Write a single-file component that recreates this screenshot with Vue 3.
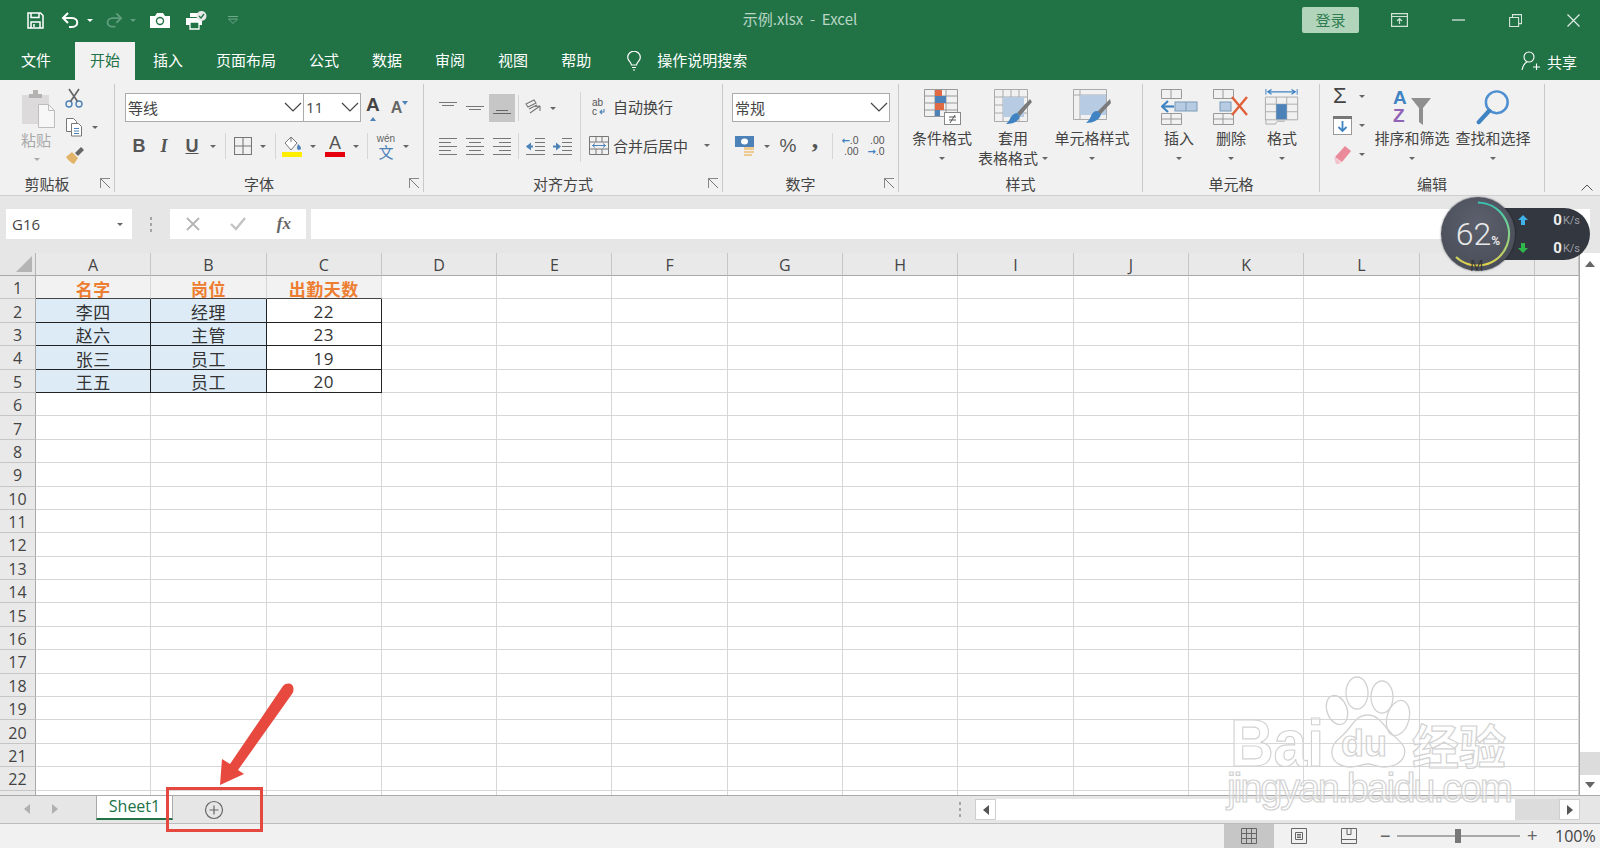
<script setup>
const cols = ['A', 'B', 'C', 'D', 'E', 'F', 'G', 'H', 'I', 'J', 'K', 'L', 'M', '']
const rows = Array.from({ length: 23 }, (_, i) => i + 1)

const table = {
  1: ['名字', '岗位', '出勤天数'],
  2: ['李四', '经理', '22'],
  3: ['赵六', '主管', '23'],
  4: ['张三', '员工', '19'],
  5: ['王五', '员工', '20'],
}

const tabs = ['插入', '页面布局', '公式', '数据', '审阅', '视图', '帮助']

function cellText(r, c) {
  return table[r] && c < 3 ? table[r][c] : ''
}

function cellClass(r, c) {
  if (c > 2 || r > 5) return ''
  if (r === 1) return 'c-head'
  return c < 2 ? 'c-name' : 'c-num'
}

const lines = {
  top: 'M0 1.5h18M3 4.5h12',
  mid: 'M0 5.5h18M3 8.5h12',
  bot: 'M3 9.5h12M0 12.5h18',
  left: 'M0 1.5h18M0 5.5h12M0 9.5h18M0 13.5h12M0 17.5h18',
  center: 'M0 1.5h18M3 5.5h12M0 9.5h18M3 13.5h12M0 17.5h18',
  right: 'M0 1.5h18M6 5.5h12M0 9.5h18M6 13.5h12M0 17.5h18',
}
</script>

<template>
  <div class="app">
    <header class="titlebar">
      <div class="qat">
        <svg class="q-save" width="17" height="17" viewBox="0 0 17 17" fill="none" stroke="#fff" stroke-width="1.5"><path d="M1 1h12.5L16 3.5V16H1z"/><path d="M4 1v4.5h8V1M4 16v-6h9v6"/><path d="M7 12v3" /></svg>
        <svg class="q-undo" width="19" height="17" viewBox="0 0 19 17" fill="none" stroke="#fff" stroke-width="2"><path d="M7 1L2 6l5 5"/><path d="M2 6h9c7 0 7 9 0 9H8"/></svg>
        <i class="caret white q-c1"></i>
        <svg class="q-redo" width="18" height="17" viewBox="0 0 19 17" fill="none" stroke="#5f9d7c" stroke-width="2"><path d="M12 1l5 5-5 5"/><path d="M17 6H8c-7 0-7 9 0 9h3"/></svg>
        <i class="caret dim q-c2"></i>
        <svg class="q-cam" width="20" height="15" viewBox="0 0 20 15"><path d="M0 3h5l2-3h6l2 3h5v12H0z" fill="#fff"/><circle cx="10" cy="8" r="3.5" fill="none" stroke="#217346" stroke-width="1.4"/></svg>
        <svg class="q-print" width="21" height="19" viewBox="0 0 21 19"><path d="M4 2h8v4H4zM0 7h16v7H0z" fill="#fff"/><path d="M4 11h9v7H4z" fill="#217346" stroke="#fff" stroke-width="1.3"/><circle cx="15.5" cy="5" r="5" fill="#e8e8e8"/><path d="M13 5l2 2 3-4" fill="none" stroke="#217346" stroke-width="1.3"/></svg>
        <svg class="q-more" width="12" height="8" viewBox="0 0 12 8" fill="none" stroke="#6fa98a"><path d="M1 .5h10M1.500 3l4.500 4.500L10.500 3z"/></svg>
      </div>
      <div class="doc-title">示例.xlsx&nbsp; - &nbsp;Excel</div>
      <div class="win">
        <button class="login">登录</button>
        <svg class="w-disp" width="17" height="14" viewBox="0 0 17 14" fill="none" stroke="#cfe3d6" stroke-width="1.2"><path d="M.6.6h15.800v12.800H.6zM.6 3.500h15.800M8.500 11V6M6 8l2.500-2.500L11 8"/></svg>
        <svg class="w-min" width="13" height="2" viewBox="0 0 13 2"><path d="M0 1h13" stroke="#e0ece5" stroke-width="1.2"/></svg>
        <svg class="w-max" width="13" height="13" viewBox="0 0 13 13" fill="none" stroke="#d5e5db" stroke-width="1.1"><path d="M.6 3.500h9v9h-9zM3.500 3.500V.6h9v9H9.600"/></svg>
        <svg class="w-close" width="13" height="13" viewBox="0 0 13 13" stroke="#e0ece5" stroke-width="1.2"><path d="M.5.5l12 12M12.500.5l-12 12"/></svg>
      </div>
    </header>

    <nav class="tabs">
      <span class="tab file">文件</span>
      <span class="tab active">开始</span>
      <span v-for="t in tabs" :key="t" class="tab">{{ t }}</span>
      <svg class="bulb" width="14" height="20" viewBox="0 0 14 20" fill="none" stroke="#fff" stroke-width="1.2"><path d="M4.500 14c0-3-3.800-4-3.800-7.500a6.300 6.300 0 0 1 12.600 0C13.300 10 9.500 11 9.500 14z"/><path d="M5 16.500h4M6 19h2"/></svg>
      <span class="tab search">操作说明搜索</span>
      <div class="share">
        <svg width="20" height="20" viewBox="0 0 20 20" fill="none" stroke="#fff" stroke-width="1.1"><circle cx="8" cy="6" r="5"/><path d="M1 19c1-5 3-7 5-8M12 16h7M15.500 12.500V19"/></svg>
        <span>共享</span>
      </div>
    </nav>

    <section class="ribbon">
      <!-- clipboard -->
      <div class="group g-clip">
        <div class="body clip-body">
          <div class="paste">
            <svg width="36" height="38" viewBox="0 0 36 38"><rect x="1" y="5" width="27" height="29" fill="#dcdada"/><path d="M8 8V4h4V0h5v4h4v4z" fill="#b5b2b2"/><path d="M17.500 14.500h10l6 6v17h-16z" fill="#f7f7f7" stroke="#bdbdbd"/><path d="M27.500 14.500v6h6" fill="none" stroke="#bdbdbd"/></svg>
            <span class="paste-text">粘贴</span>
            <i class="caret light paste-caret"></i>
          </div>
          <div class="clip-tools">
            <svg width="18" height="20" viewBox="0 0 18 20" fill="none"><circle cx="4" cy="16" r="3" stroke="#4d82b8" stroke-width="1.4"/><circle cx="14" cy="16" r="3" stroke="#4d82b8" stroke-width="1.4"/><path d="M5.500 13.500L14 1M12.500 13.500L4 1" stroke="#666" stroke-width="1.700"/></svg>
            <div class="clip-copy">
              <svg width="18" height="20" viewBox="0 0 18 20" fill="#fff" stroke="#777"><path d="M1.500 1.500h7l3 3v10h-10z"/><path d="M6.500 6.500h7l3 3v9.500h-10z"/><path d="M9 11.500h5M9 14h5M9 16.500h5" stroke="#4d82b8"/></svg>
              <i class="caret"></i>
            </div>
            <svg width="20" height="18" viewBox="0 0 20 18"><path d="M1 11l6-5 6 6-4 6C6 17 3 14 1 11z" fill="#e2b46a"/><path d="M10 7l6-6 3 3-6 6z" fill="#666"/></svg>
          </div>
        </div>
        <div class="label has-launch"><span>剪贴板</span><i class="launch"></i></div>
      </div>

      <!-- font -->
      <div class="group g-font">
        <div class="body">
          <div class="font-top">
            <div class="combo f-name"><span>等线</span><svg width="18" height="10" viewBox="0 0 18 10" fill="none" stroke="#444" stroke-width="1.2"><path d="M1 1l8 8 8-8"/></svg></div>
            <div class="combo f-size"><span class="num">11</span><svg width="18" height="10" viewBox="0 0 18 10" fill="none" stroke="#444" stroke-width="1.2"><path d="M1 1l8 8 8-8"/></svg></div>
            <div class="grow-a big">A<i class="tri-up"></i></div>
            <div class="grow-a small">A<i class="tri-down"></i></div>
          </div>
          <div class="font-row">
            <span class="tb bold">B</span>
            <span class="tb ital">I</span>
            <span class="tb under">U</span>
            <i class="caret"></i>
            <i class="sep"></i>
            <svg width="18" height="18" viewBox="0 0 18 18" fill="none" stroke="#777" stroke-width="1.100"><path d="M.5.500h17v17H.5zM9 .5v17M.5 9h17"/></svg>
            <i class="caret"></i>
            <i class="sep"></i>
            <div class="tool-col">
              <svg width="20" height="15" viewBox="0 0 20 15"><path d="M3 7l6-6 6 6-6 7z" fill="#fff" stroke="#777"/><path d="M9 1V6" stroke="#777"/><path d="M16 8c2 2 3 3 3 4a2 2 0 0 1-4 0c0-1 .5-2 1-4z" fill="#4d82b8"/></svg>
              <i class="bar yellow"></i>
            </div>
            <i class="caret"></i>
            <div class="tool-col">
              <span class="color-a">A</span>
              <i class="bar red"></i>
            </div>
            <i class="caret"></i>
            <i class="sep"></i>
            <div class="wen"><small>wén</small><span>文</span></div>
            <i class="caret"></i>
          </div>
        </div>
        <div class="label has-launch"><span>字体</span><i class="launch"></i></div>
      </div>

      <!-- alignment -->
      <div class="group g-align">
        <div class="body align-body">
          <div class="align-left">
            <svg width="18" height="14" viewBox="0 0 18 14" fill="none" stroke="#777"><path :d="lines.top"/></svg>
            <svg width="18" height="14" viewBox="0 0 18 14" fill="none" stroke="#777"><path :d="lines.mid"/></svg>
            <span class="selected"><svg width="18" height="14" viewBox="0 0 18 14" fill="none" stroke="#666"><path :d="lines.bot"/></svg></span>
            <i class="sep"></i>
            <svg width="20" height="18" viewBox="0 0 20 18" fill="none" stroke="#777" stroke-width="1.1"><path d="M1 5l8-4 2 3-8 4zM4 10l8-4M5 14l10-7M15 7v5M15 7l-5 .500"/></svg>
            <i class="caret shift"></i>
            <svg width="18" height="19" viewBox="0 0 18 19" fill="none" stroke="#777"><path :d="lines.left"/></svg>
            <svg width="18" height="19" viewBox="0 0 18 19" fill="none" stroke="#777"><path :d="lines.center"/></svg>
            <svg width="18" height="19" viewBox="0 0 18 19" fill="none" stroke="#777"><path :d="lines.right"/></svg>
            <i class="sep"></i>
            <svg width="19" height="19" viewBox="0 0 19 19" fill="none"><path d="M9 1.500h10M9 5.500h10M9 9.500h10M9 13.500h10M0 17.500h19" stroke="#777"/><path d="M1 9.500h6" stroke="#4d82b8" stroke-width="2"/><path d="M5 5.500L0 9.500l5 4z" fill="#4d82b8"/></svg>
            <svg width="19" height="19" viewBox="0 0 19 19" fill="none"><path d="M9 1.500h10M9 5.500h10M9 9.500h10M9 13.500h10M0 17.500h19" stroke="#777"/><path d="M0 9.500h5" stroke="#4d82b8" stroke-width="2"/><path d="M3 5.500l5 4-5 4z" fill="#4d82b8"/></svg>
          </div>
          <i class="vsep"></i>
          <div class="align-right">
            <div class="wrap-row">
              <svg width="20" height="20" viewBox="0 0 20 20"><text x="3" y="9" class="svg-ab">ab</text><text x="3" y="18" class="svg-ab">c</text><path d="M15 12v3h-4M13 13l-2 2 2 2" fill="none" stroke="#4d82b8" stroke-width="1.100"/></svg>
              <span>自动换行</span>
            </div>
            <div class="wrap-row merge">
              <svg width="20" height="19" viewBox="0 0 20 19" fill="none" stroke="#777"><path d="M.5.500h19v18H.5zM.5 6h19M.5 13h19M7 .5V6M13 .5V6M7 13v5.500M13 13v5.500"/><path d="M3.500 9.500h13M6 7.500l-2.500 2 2.500 2M14 7.500l2.500 2-2.500 2" stroke="#4d82b8"/></svg>
              <span>合并后居中</span>
              <i class="caret merge-caret"></i>
            </div>
          </div>
        </div>
        <div class="label has-launch"><span>对齐方式</span><i class="launch"></i></div>
      </div>

      <!-- number -->
      <div class="group g-num">
        <div class="body">
          <div class="combo n-box"><span>常规</span><svg width="18" height="10" viewBox="0 0 18 10" fill="none" stroke="#444" stroke-width="1.2"><path d="M1 1l8 8 8-8"/></svg></div>
          <div class="num-row">
            <svg width="20" height="20" viewBox="0 0 20 20"><rect x="0" y="0" width="19" height="11" fill="#4d82b8"/><ellipse cx="9.500" cy="5.500" rx="3.500" ry="3" fill="#fff"/><rect x="9" y="11" width="10" height="3" fill="#eecb90"/><rect x="9" y="15" width="10" height="2" fill="#eecb90"/><rect x="9" y="18" width="8" height="2" fill="#eecb90"/></svg>
            <i class="caret"></i>
            <span class="pct">%</span>
            <span class="comma">,</span>
            <i class="sep"></i>
            <div class="dec"><span><b>←</b>.0</span><span>.00</span></div>
            <div class="dec"><span>.00</span><span><b>→</b>.0</span></div>
          </div>
        </div>
        <div class="label has-launch"><span>数字</span><i class="launch"></i></div>
      </div>

      <!-- styles -->
      <div class="group g-style">
        <div class="body big-row style-row">
          <div class="big w-cond">
            <svg width="37" height="36" viewBox="0 0 37 36"><g fill="none" stroke="#999"><path d="M.5.500h33v27H.5zM.5 7h33M.5 14h33M.5 21h33M11 .5v27M22 .5v27"/></g><rect x="11" y="1" width="7" height="6" fill="#e06a44"/><rect x="11" y="7" width="11" height="7" fill="#4d82b8"/><rect x="11" y="14" width="9" height="7" fill="#e06a44"/><rect x="11" y="21" width="5" height="6" fill="#4d82b8"/><rect x="20.500" y="23.500" width="16" height="12" fill="#fff" stroke="#888"/><path d="M25 28h7M25 31h7M31 26l-5 8" stroke="#555" fill="none"/></svg>
            <span>条件格式</span>
            <span class="c-line"><i class="caret"></i></span>
          </div>
          <div class="big w-tbl">
            <svg width="38" height="36" viewBox="0 0 38 36"><g fill="none" stroke="#aaa"><path d="M.5.500h33v32H.5zM.5 8h33M.5 16h33M.5 24h33M9 .5v32M17 .5v32M25 .5v32"/></g><rect x="9" y="8" width="21" height="20" fill="#b7cce3"/><path d="M36 10l2 3-12 14-3-3z" fill="#7a7a7a"/><path d="M23 24l3 3c-1 5-6 8-14 8 2-2 3-3 5-7 2-3 4-4 6-4z" fill="#3f83c2"/></svg>
            <span>套用</span>
            <span class="c-line">表格格式<i class="caret"></i></span>
          </div>
          <div class="big w-cell">
            <svg width="38" height="36" viewBox="0 0 38 36"><g fill="none" stroke="#aaa"><path d="M.5.500h33v30H.5zM.5 6h33M7 .5v30"/></g><rect x="7" y="6" width="26" height="20" fill="#b7cce3"/><path d="M37 10l1 4-11 12-3-3z" fill="#7a7a7a"/><path d="M24 22l4 3c-1 6-8 9-15 9 2-2 4-4 5-7 1-3 3-5 6-5z" fill="#3f83c2"/></svg>
            <span>单元格样式</span>
            <span class="c-line"><i class="caret"></i></span>
          </div>
        </div>
        <div class="label"><span>样式</span></div>
      </div>

      <!-- cells -->
      <div class="group g-cell">
        <div class="body big-row cell-row">
          <div class="big w-ins">
            <svg width="37" height="36" viewBox="0 0 37 36" fill="none"><path d="M.5.500h20v9H.5zM10 .5v9M.5 24.500h20v11H.5zM10 24.500v11M.5 30h20" stroke="#999"/><rect x="14" y="13" width="22" height="9" fill="#b7cce3" stroke="#7a99b8"/><path d="M25 13v9" stroke="#7a99b8"/><path d="M1 17.500h12" stroke="#3f83c2" stroke-width="2.200"/><path d="M7 12l-6 5.500 6 5.500" stroke="#3f83c2" stroke-width="2.200"/></svg>
            <span>插入</span>
            <span class="c-line"><i class="caret"></i></span>
          </div>
          <div class="big w-del">
            <svg width="36" height="36" viewBox="0 0 36 36" fill="none"><path d="M.5.500h20v9H.5zM10 .5v9M.5 24.500h20v11H.5zM10 24.500v11M.5 30h20" stroke="#999"/><rect x="7" y="13" width="11" height="9" fill="#b7cce3" stroke="#7a99b8"/><path d="M19 8l15 18M34 8L19 26" stroke="#e0603a" stroke-width="2.400"/></svg>
            <span>删除</span>
            <span class="c-line"><i class="caret"></i></span>
          </div>
          <div class="big w-fmt">
            <svg width="36" height="38" viewBox="0 0 36 38" fill="none"><path d="M1 0v6M34 0v6" stroke="#3f83c2"/><path d="M3 3h29M7 .5L3 3l4 2.500M28 .5L32 3l-4 2.500" stroke="#3f83c2" stroke-width="1.300"/><path d="M.5 8.500h34v24H.5zM.5 16h34M.5 24h34M12 8.500v24M23 8.500v24" stroke="#aaa"/><rect x="12" y="16" width="11" height="16" fill="#4d82b8"/><path d="M1 32v5h10l2-3h8" stroke="#aaa"/></svg>
            <span>格式</span>
            <span class="c-line"><i class="caret"></i></span>
          </div>
        </div>
        <div class="label"><span>单元格</span></div>
      </div>

      <!-- editing -->
      <div class="group g-edit">
        <div class="body big-row edit-row">
          <div class="edit-col">
            <div class="edit-tool"><span class="sigma">Σ</span><i class="caret"></i></div>
            <div class="edit-tool">
              <svg width="19" height="19" viewBox="0 0 19 19"><rect x=".5" y=".5" width="18" height="18" fill="#fff" stroke="#999"/><rect x="0" y="0" width="19" height="3" fill="#777"/><path d="M9.500 5v10M5.500 11l4 4 4-4" fill="none" stroke="#3f83c2" stroke-width="1.800"/></svg>
              <i class="caret"></i>
            </div>
            <div class="edit-tool">
              <svg width="19" height="19" viewBox="0 0 19 19"><path d="M12 1l6 5-9 11-7-5z" fill="#ea8a9b"/><path d="M1 12l7 5-2 2H3z" fill="#f3c3cc"/></svg>
              <i class="caret"></i>
            </div>
          </div>
          <div class="big w-sort">
            <svg width="38" height="36" viewBox="0 0 38 36"><text x="0" y="15" class="svg-az blue">A</text><text x="0" y="33" class="svg-az purple">Z</text><path d="M18 9h20l-8 10v17l-4-3V19z" fill="#8f8f8f"/></svg>
            <span>排序和筛选</span>
            <span class="c-line"><i class="caret"></i></span>
          </div>
          <div class="big w-find">
            <svg width="36" height="38" viewBox="0 0 36 38" fill="none"><circle cx="22" cy="14" r="11.500" stroke="#4d8fd0" stroke-width="2.600"/><path d="M14 23L3 35" stroke="#3f83c2" stroke-width="4.500" stroke-linecap="round"/></svg>
            <span>查找和选择</span>
            <span class="c-line"><i class="caret"></i></span>
          </div>
        </div>
        <div class="label"><span>编辑</span></div>
      </div>

      <svg class="collapse" width="12" height="7" viewBox="0 0 12 7" fill="none" stroke="#555"><path d="M.5 6.500L6 1l5.500 5.500"/></svg>
    </section>

    <section class="formula">
      <div class="namebox"><span>G16</span><i class="caret"></i></div>
      <div class="dots"><i></i><i></i><i></i></div>
      <div class="fx-box">
        <svg width="14" height="14" viewBox="0 0 14 14" stroke="#b5b5b5" stroke-width="1.800"><path d="M1 1l12 12M13 1L1 13"/></svg>
        <svg width="16" height="14" viewBox="0 0 16 14" fill="none" stroke="#c2c2c2" stroke-width="2.400"><path d="M1 7l5 5 9-11"/></svg>
        <span class="fx">fx</span>
      </div>
      <div class="finput"></div>
    </section>

    <section class="sheet">
      <div class="grid">
        <div class="corner"><i></i></div>
        <div v-for="c in cols" :key="'h' + c" class="col-head">{{ c }}</div>
        <template v-for="r in rows" :key="r">
          <div class="row-head">{{ r < 23 ? r : '' }}</div>
          <div v-for="(c, i) in cols" :key="c + r" class="cell" :class="cellClass(r, i)">{{ cellText(r, i) }}</div>
        </template>
      </div>
      <div class="vscroll">
        <div class="v-btn"><i class="tri-up gray"></i></div>
        <div class="v-track"></div>
        <div class="v-gap"></div>
        <div class="v-btn low"><i class="tri-down gray"></i></div>
      </div>
    </section>

    <section class="tabbar">
      <div class="nav"><i class="tri-left"></i><i class="tri-right"></i></div>
      <div class="sheet-tab">Sheet1</div>
      <svg class="add" width="20" height="20" viewBox="0 0 20 20" fill="none" stroke="#666" stroke-width="1.200"><circle cx="10" cy="10" r="8.500"/><path d="M10 5.500v9M5.500 10h9"/></svg>
      <div class="dots h-dots"><i></i><i></i><i></i></div>
      <div class="hscroll">
        <div class="h-btn"><i class="tri-left dark"></i></div>
        <div class="h-track"></div>
        <div class="h-btn"><i class="tri-right dark"></i></div>
      </div>
    </section>

    <footer class="status">
      <div class="view on">
        <svg width="16" height="16" viewBox="0 0 16 16" fill="none" stroke="#666"><path d="M.5.500h15v15H.5zM5.500.5v15M10.500.5v15M.5 5.500h15M.5 10.500h15"/></svg>
      </div>
      <div class="view">
        <svg width="16" height="16" viewBox="0 0 16 16" fill="none" stroke="#666"><path d="M.5.500h15v15H.5zM4.500 4.500h7v7h-7zM6 6.500h4M6 8h4M6 9.500h4"/></svg>
      </div>
      <div class="view">
        <svg width="16" height="16" viewBox="0 0 16 16" fill="none" stroke="#666"><path d="M.5.500h15v15H.5zM.5 11.500h15M6 .5v6h4V.5"/></svg>
      </div>
      <div class="zoom">
        <span class="z-sign">−</span>
        <div class="slider"><i></i></div>
        <span class="z-sign">+</span>
      </div>
      <span class="pct-text">100%</span>
    </footer>

    <!-- speed widget floats over the window -->
    <div class="speed">
      <div class="pill">
        <div class="rate"><svg width="10" height="10" viewBox="0 0 10 10"><path d="M5 0l5 5H7v5H3V5H0z" fill="#3fb0e8"/></svg><b>0</b><span>K/s</span></div>
        <div class="rate"><svg width="10" height="10" viewBox="0 0 10 10"><path d="M3 0h4v5h3l-5 5-5-5h3z" fill="#2fb84c"/></svg><b>0</b><span>K/s</span></div>
      </div>
      <div class="ring">
        <svg width="76" height="76" viewBox="0 0 76 76" fill="none">
          <defs><linearGradient id="arc" gradientUnits="userSpaceOnUse" x1="38" y1="5" x2="38" y2="71"><stop offset="0" stop-color="#35c4b4"/><stop offset="0.55" stop-color="#8fd283"/><stop offset="1" stop-color="#e6d04a"/></linearGradient></defs>
          <path d="M38 6.500A31.500 31.500 0 1 1 16 61" stroke="url(#arc)" stroke-width="2.200"/>
        </svg>
        <span class="ring-val">62<small>%</small></span>
        <span class="under-m">M</span>
      </div>
    </div>

    <!-- baidu watermark -->
    <svg class="mark" width="300" height="150" viewBox="0 0 300 150">
      <g fill="none" stroke="#d2d2d2" stroke-width="1.300">
        <ellipse cx="112" cy="38" rx="10" ry="15" transform="rotate(-20 112 38)"/>
        <ellipse cx="132" cy="21" rx="11" ry="16"/>
        <ellipse cx="157" cy="25" rx="11" ry="16"/>
        <ellipse cx="173" cy="46" rx="11" ry="18" transform="rotate(15 173 46)"/>
        <path d="M143 43c11 0 15 10 24 19 9 9 15 12 12 22-3 8-12 11-20 11-7 0-11-3-16-3-5 0-9 3-17 3-9 0-18-4-19-13-1-10 5-13 12-20 9-9 12-19 24-19z"/>
      </g>
      <text x="5" y="94" class="wm-big" textLength="94" lengthAdjust="spacingAndGlyphs">Bai</text>
      <text x="116" y="84" class="wm-du" textLength="46" lengthAdjust="spacingAndGlyphs">du</text>
      <text x="187" y="92" class="wm-cn">经验</text>
      <text x="2" y="130" class="wm-url" textLength="286">jingyan.baidu.com</text>
    </svg>

    <!-- screenshot annotation -->
    <svg class="pointer" width="90" height="110" viewBox="0 0 90 110"><path d="M10 105L12 79l8 5L73 6c3-3 7-3 9-1s2 6 0 9L28 90l6 4z" fill="#e8493f"/></svg>
    <div class="redbox"></div>
  </div>
</template>

<style scoped>
.app {
  position: relative;
  width: 1600px;
  height: 848px;
  display: flex;
  flex-direction: column;
  overflow: hidden;
  background: #fff;
  color: #444;
  font-family: "Noto Sans CJK SC", "Liberation Sans", sans-serif;
  font-size: 15px;
}
i { display: block; }
svg { display: block; flex: none; }

/* title bar */
.titlebar {
  height: 40px;
  flex: none;
  background: #217346;
  display: grid;
  grid-template-columns: 1fr auto 1fr;
  align-items: center;
}
.qat { display: flex; align-items: center; padding-left: 27px; }
.q-undo { margin-left: 17px; }
.q-c1 { margin-left: 7px; }
.q-redo { margin-left: 12px; }
.q-c2 { margin-left: 7px; }
.q-cam { margin-left: 14px; }
.q-print { margin-left: 16px; }
.q-more { margin-left: 20px; }
.doc-title { color: #b9d5c5; font-size: 15px; padding-bottom: 3px; }
.win { display: flex; align-items: center; justify-content: flex-end; padding-right: 20px; }
.login {
  width: 57px;
  height: 26px;
  padding: 0 0 2px;
  border: none;
  border-radius: 2px;
  background: #b1d4bb;
  color: #2f7c51;
  font: inherit;
}
.w-disp { margin-left: 32px; }
.w-min { margin-left: 44px; }
.w-max { margin-left: 44px; }
.w-close { margin-left: 45px; }

/* ribbon tabs */
.tabs {
  height: 40px;
  flex: none;
  background: #217346;
  display: flex;
  align-items: flex-end;
  color: #fff;
  padding-left: 6px;
  gap: 3px;
}
.tab {
  height: 38px;
  line-height: 36px;
  padding: 0 15px;
  white-space: nowrap;
}
.tab.file { margin-right: 6px; }
.tab.active { background: #f1f1f1; color: #217346; }
.bulb { margin: 0 0 9px 18px; }
.tab.search { padding: 0 0 0 13px; }
.share {
  margin-left: auto;
  height: 38px;
  display: flex;
  align-items: center;
  gap: 6px;
  padding-right: 23px;
}

/* ribbon */
.ribbon {
  height: 116px;
  flex: none;
  box-sizing: border-box;
  background: #f1f1f1;
  border-bottom: 1px solid #cfcfcf;
  padding-top: 4px;
  display: flex;
}
.group {
  height: 108px;
  box-sizing: border-box;
  border-right: 1px solid #c9c9c9;
  display: flex;
  flex-direction: column;
  flex: none;
}
.g-clip { width: 115px; }
.g-font { width: 309px; }
.g-align { width: 299px; }
.g-num { width: 176px; }
.g-style { width: 244px; }
.g-cell { width: 177px; }
.g-edit { width: 225px; }
.body { flex: 1; min-height: 0; }
.label {
  height: 19px;
  line-height: 22px;
  text-align: center;
  color: #444;
  font-size: 15px;
  position: relative;
}
.label.has-launch { padding-right: 20px; }
.launch {
  position: absolute;
  right: 4px;
  top: 5px;
  width: 9px;
  height: 9px;
  border-left: 1px solid #888;
  border-top: 1px solid #888;
  background: linear-gradient(45deg, transparent 45%, #777 46%, #777 54%, transparent 55%);
}
.caret {
  flex: none;
  width: 0;
  height: 0;
  border-left: 3px solid transparent;
  border-right: 3px solid transparent;
  border-top: 3px solid #666;
  justify-self: center;
}
.caret.white { border-top-color: #fff; }
.caret.dim { border-top-color: #5f9d7c; }
.caret.light { border-top-color: #aaa; }
.sep {
  width: 1px;
  height: 26px;
  background: #d6d6d6;
  justify-self: center;
}

/* clipboard */
.clip-body { display: flex; padding: 6px 0 0 20px; }
.paste { width: 38px; display: flex; flex-direction: column; align-items: center; }
.paste-text { color: #a9a9a9; line-height: 20px; margin: 2px 6px 0 0; }
.paste-caret { margin: 8px 4px 0 0; }
.clip-tools { margin-left: 7px; display: flex; flex-direction: column; gap: 9px; margin-top: -2px; }
.clip-copy { display: flex; align-items: center; gap: 9px; }

/* font */
.combo {
  height: 29px;
  box-sizing: border-box;
  background: #fff;
  border: 1px solid #ababab;
  display: flex;
  align-items: center;
  justify-content: space-between;
  padding: 0 1px 1px 2px;
  color: #444;
  font-size: 15px;
}
.font-top { display: flex; align-items: center; margin: 9px 0 0 10px; }
.f-name { width: 179px; }
.f-size { width: 58px; margin-left: -1px; }
.num { font-family: "Open Sans", sans-serif; font-size: 15px; }
.grow-a {
  display: flex;
  align-items: flex-start;
  font-family: "Liberation Sans", sans-serif;
  font-weight: bold;
  color: #666;
}
.grow-a.big { font-size: 19px; margin-left: 5px; }
.grow-a.small { font-size: 16px; margin-left: 11px; }
.tri-up, .tri-down {
  width: 0;
  height: 0;
  border-left: 3px solid transparent;
  border-right: 3px solid transparent;
}
.tri-up { border-bottom: 4px solid #4d82b8; margin-top: 2px; }
.tri-down { border-top: 4px solid #4d82b8; margin-top: 2px; }
.font-row {
  display: grid;
  grid-template-columns: 28px 22px 34px 8px 16px 19px 22px 2px 32px 10px 34px 8px 14px 24px 16px;
  align-items: center;
  justify-items: center;
  height: 28px;
  margin: 10px 0 0 10px;
}
.tb { font-size: 18px; color: #555; line-height: 1; }
.bold { font-family: "Liberation Sans", sans-serif; font-weight: bold; }
.ital { font-family: "Liberation Serif", serif; font-style: italic; font-weight: bold; }
.under { font-family: "Liberation Sans", sans-serif; text-decoration: underline; font-weight: bold; }
.tool-col { display: flex; flex-direction: column; align-items: center; }
.bar { width: 20px; height: 5px; margin-top: 1px; }
.bar.yellow { background: #ffee00; }
.bar.red { background: #e6000f; }
.color-a {
  font-family: "Liberation Sans", sans-serif;
  font-size: 18px;
  line-height: 15px;
  color: #555;
}
.wen { display: flex; flex-direction: column; align-items: center; color: #4d82b8; }
.wen small { font-family: "Liberation Sans", sans-serif; font-size: 10px; line-height: 10px; color: #666; }
.wen span { font-size: 15px; line-height: 15px; }

/* alignment */
.align-body { display: flex; padding: 10px 0 0 10px; }
.align-left {
  display: grid;
  grid-template-columns: 27px 27px 27px 6px 28px 26px;
  grid-template-rows: 28px 26px;
  row-gap: 11px;
  align-items: center;
  justify-items: center;
  height: 65px;
}
.selected {
  width: 26px;
  height: 28px;
  background: #c6c6c6;
  display: flex;
  align-items: center;
  justify-content: center;
}
.caret.shift { justify-self: start; margin-left: 1px; }
.vsep { width: 1px; height: 70px; background: #d6d6d6; margin: -2px 0 0 5px; }
.align-right { margin-left: 8px; display: flex; flex-direction: column; gap: 11px; }
.wrap-row {
  height: 28px;
  box-sizing: border-box;
  padding-bottom: 3px;
  display: flex;
  align-items: center;
  gap: 4px;
  color: #444;
  white-space: nowrap;
}
.wrap-row.merge { height: 26px; padding-bottom: 1px; }
.merge-caret { margin-left: 12px; }
.svg-ab { font: 10px "Liberation Sans", sans-serif; fill: #555; }

/* number */
.n-box { width: 158px; margin: 9px 0 0 9px; }
.num-row {
  display: grid;
  grid-template-columns: 34px 10px 32px 22px 12px 24px 28px;
  align-items: center;
  justify-items: center;
  height: 26px;
  margin: 11px 0 0 5px;
}
.pct { font-family: "Liberation Sans", sans-serif; font-size: 19px; color: #555; }
.comma { font-family: "Liberation Serif", serif; font-size: 26px; font-weight: bold; line-height: 16px; color: #555; margin-top: -12px; }
.dec {
  display: flex;
  flex-direction: column;
  align-items: flex-end;
  font-family: "Liberation Sans", sans-serif;
  font-size: 10.500px;
  line-height: 11px;
  color: #555;
}
.dec b { color: #3f83c2; font-family: "DejaVu Sans", sans-serif; font-size: 10px; }

/* big buttons */
.big-row { display: flex; padding-top: 5px; }
.big {
  display: flex;
  flex-direction: column;
  align-items: center;
  line-height: 20px;
  white-space: nowrap;
  color: #444;
  font-size: 15px;
}
.big svg { height: 36px; margin-bottom: 3px; }
.big span { height: 20px; }
.c-line { display: flex; align-items: center; gap: 4px; }
.style-row { margin-left: 10px; }
.w-cond { width: 66px; }
.w-tbl { width: 76px; }
.w-cell { width: 82px; }
.cell-row { margin-left: 10px; }
.w-ins { width: 52px; }
.w-del { width: 52px; }
.w-fmt { width: 50px; }
.edit-row { padding-top: 0; }
.edit-col { width: 54px; padding: 2px 0 0 13px; box-sizing: border-box; display: flex; flex-direction: column; gap: 9px; }
.edit-tool { height: 20px; display: flex; align-items: center; gap: 7px; }
.sigma { font-family: "Liberation Sans", sans-serif; font-size: 22px; line-height: 20px; color: #444; width: 19px; }
.w-sort { width: 76px; padding-top: 5px; }
.w-find { width: 80px; padding-top: 5px; margin-left: 3px; }
.svg-az { font: bold 19px "Liberation Sans", sans-serif; }
.svg-az.blue { fill: #3f83c2; }
.svg-az.purple { fill: #9163b6; }
.collapse { align-self: flex-end; margin: 0 0 4px 36px; }

/* formula bar */
.formula {
  height: 57px;
  flex: none;
  box-sizing: border-box;
  background: #e6e6e6;
  display: flex;
  align-items: flex-start;
  padding: 13px 10px 0 6px;
}
.namebox {
  width: 126px;
  height: 30px;
  box-sizing: border-box;
  background: #fff;
  display: flex;
  align-items: center;
  justify-content: space-between;
  padding: 0 9px 0 6px;
  font-family: "Open Sans", sans-serif;
  font-size: 15px;
  color: #444;
}
.dots { display: flex; flex-direction: column; gap: 3px; }
.dots i { width: 2px; height: 3px; background: #a5a5a5; }
.formula .dots { margin: 8px 0 0 18px; }
.fx-box {
  width: 136px;
  height: 30px;
  margin-left: 18px;
  background: #fff;
  display: flex;
  align-items: center;
  justify-content: space-between;
  box-sizing: border-box;
  padding: 0 15px 0 16px;
}
.fx { font: italic bold 17px "Liberation Serif", serif; color: #666; }
.finput { flex: 1; height: 30px; background: #fff; margin-left: 5px; }

/* sheet */
.sheet { flex: none; height: 543px; display: flex; background: #e6e6e6; border-bottom: 1px solid #a9a9a9; box-sizing: border-box; }
.grid {
  width: 1580px;
  height: 100%;
  flex: none;
  overflow: hidden;
  display: grid;
  grid-template-columns: 36px repeat(13, 115.300px) 1fr;
  grid-template-rows: 23px;
  grid-auto-rows: 23.400px;
  align-content: start;
  background: #fff;
  border-right: 1px solid #a9a9a9;
  box-sizing: border-box;
}
.corner {
  background: #e6e6e6;
  border-right: 1px solid #b4b4b4;
  border-bottom: 1px solid #a9a9a9;
  box-sizing: border-box;
  position: relative;
}
.corner i {
  position: absolute;
  right: 3px;
  bottom: 3px;
  width: 0;
  height: 0;
  border-left: 16px solid transparent;
  border-bottom: 16px solid #b4b4b4;
}
.col-head, .row-head {
  background: #e9e9e9;
  display: flex;
  align-items: center;
  justify-content: center;
  box-sizing: border-box;
  padding-top: 2px;
  font-family: "Open Sans", sans-serif;
  font-size: 16px;
  line-height: 1;
  color: #444;
}
.col-head { border-right: 1px solid #c6c6c6; border-bottom: 1px solid #a9a9a9; }
.row-head { border-right: 1px solid #a9a9a9; border-bottom: 1px solid #c6c6c6; }
.cell {
  box-sizing: border-box;
  border-right: 1px solid #d6d6d6;
  border-bottom: 1px solid #d6d6d6;
  padding-top: 2px;
  display: flex;
  align-items: center;
  justify-content: center;
  font-size: 17px;
  letter-spacing: .5px;
  line-height: 1;
  color: #333;
  white-space: nowrap;
}
.c-head { background: #f2f2f2; color: #ed7d31; font-weight: bold; border-bottom-color: #444; }
.c-name { background: #ddebf7; border-right-color: #222; border-bottom-color: #222; }
.c-num { font-family: "Open Sans", sans-serif; border-right-color: #222; border-bottom-color: #222; }
.vscroll { flex: 1; display: flex; flex-direction: column; }
.v-btn { height: 21px; background: #fff; display: flex; align-items: center; justify-content: center; flex: none; }
.v-track { height: 478px; background: #fff; flex: none; }
.v-gap { flex: 1; background: #dcdcdc; }
.v-btn.low { height: 20px; }
.tri-up.gray { border-bottom-color: #666; border-left-width: 5px; border-right-width: 5px; border-bottom-width: 6px; margin: 0; }
.tri-down.gray { border-top-color: #666; border-left-width: 5px; border-right-width: 5px; border-top-width: 6px; margin: 0; }

/* sheet tabs */
.tabbar {
  height: 28px;
  box-sizing: border-box;
  flex: none;
  background: #e6e6e6;
  border-bottom: 1px solid #bdbdbd;
  display: flex;
  align-items: flex-start;
}
.nav { width: 96px; height: 26px; display: flex; align-items: center; justify-content: center; gap: 22px; flex: none; box-sizing: border-box; padding-right: 15px; }
.tri-left, .tri-right { width: 0; height: 0; border-top: 5px solid transparent; border-bottom: 5px solid transparent; }
.tri-left { border-right: 6px solid #b0b0b0; }
.tri-right { border-left: 6px solid #b0b0b0; }
.tri-left.dark { border-right-color: #555; }
.tri-right.dark { border-left-color: #555; }
.sheet-tab {
  width: 77px;
  height: 24px;
  box-sizing: border-box;
  background: #fff;
  border-left: 1px solid #a9a9a9;
  border-right: 1px solid #a9a9a9;
  border-bottom: 2px solid #217346;
  text-align: center;
  line-height: 21px;
  font-family: "Open Sans", sans-serif;
  font-size: 16px;
  color: #217346;
  flex: none;
}
.add { margin: 4px 0 0 31px; }
.h-dots { margin: 6px 0 0 735px; }
.hscroll { display: flex; width: 605px; height: 21px; margin: 3px 0 0 14px; flex: none; background: #dcdcdc; }
.h-btn { width: 21px; height: 100%; background: #fff; display: flex; align-items: center; justify-content: center; flex: none; box-sizing: border-box; border: 1px solid #cfcfcf; }
.h-track { width: 519px; background: #fff; margin-right: auto; }

/* status bar */
.status {
  height: 24px;
  flex: none;
  background: #f1f1f1;
  display: flex;
  align-items: center;
  padding-left: 1224px;
}
.view { width: 50px; height: 100%; display: flex; align-items: center; justify-content: center; flex: none; }
.view.on { background: #c6c6c6; }
.zoom { display: flex; align-items: center; margin-left: 6px; gap: 7px; }
.z-sign { font-size: 18px; line-height: 1; color: #666; font-family: "Liberation Sans", sans-serif; width: 10px; text-align: center; }
.slider { width: 123px; height: 2px; background: #a9a9a9; position: relative; }
.slider i { position: absolute; left: 58px; top: -6px; width: 6px; height: 14px; background: #777; }
.pct-text { margin-left: 18px; font-family: "Open Sans", sans-serif; font-size: 16px; color: #444; }

/* floating widget */
.speed { position: absolute; left: 1441px; top: 197px; width: 150px; height: 74px; }
.pill {
  position: absolute;
  left: 36px;
  top: 11px;
  width: 113px;
  height: 52px;
  box-sizing: border-box;
  background: #33373f;
  border-radius: 26px;
  padding: 0 10px 0 41px;
  display: flex;
  flex-direction: column;
  justify-content: center;
  gap: 4px;
  color: #eee;
}
.rate { height: 24px; display: flex; align-items: center; font-family: "Roboto", sans-serif; }
.rate b { margin-left: auto; font-size: 15px; }
.rate span { font-size: 11px; color: #9a9ea6; margin-left: 1px; }
.ring {
  position: absolute;
  left: 0;
  top: 0;
  width: 74px;
  height: 74px;
  border-radius: 50%;
  background: radial-gradient(circle at 50% 35%, #5b606c, #444954);
  box-shadow: 0 0 2px rgba(0, 0, 0, .6);
  display: flex;
  align-items: center;
  justify-content: center;
}
.ring svg { position: absolute; left: -1px; top: -1px; }
.ring-val { font-family: "Roboto", sans-serif; font-weight: 300; font-size: 32px; color: #e8e8e8; }
.ring-val small { font-size: 12px; font-weight: 700; }
.under-m { position: absolute; left: 29px; top: 60px; font-family: "Open Sans", sans-serif; font-size: 15px; color: #333; line-height: 1; }

/* watermark */
.mark { position: absolute; left: 1225px; top: 672px; pointer-events: none; }
.mark text { fill: rgba(255, 255, 255, .35); stroke: #d2d2d2; stroke-width: 1.200px; }
.wm-big { font: bold 66px "Liberation Sans", sans-serif; }
.wm-du { font: bold 36px "Liberation Sans", sans-serif; }
.wm-cn { font: bold 47px "Noto Sans CJK SC", sans-serif; }
.wm-url { font: 40px "Liberation Sans", sans-serif; }

/* annotation */
.pointer { position: absolute; left: 210px; top: 680px; }
.redbox {
  position: absolute;
  left: 166px;
  top: 787px;
  width: 97px;
  height: 45px;
  box-sizing: border-box;
  border: 3px solid #e5483e;
}
</style>

<style>
html, body { margin: 0; overflow: hidden; }
</style>
